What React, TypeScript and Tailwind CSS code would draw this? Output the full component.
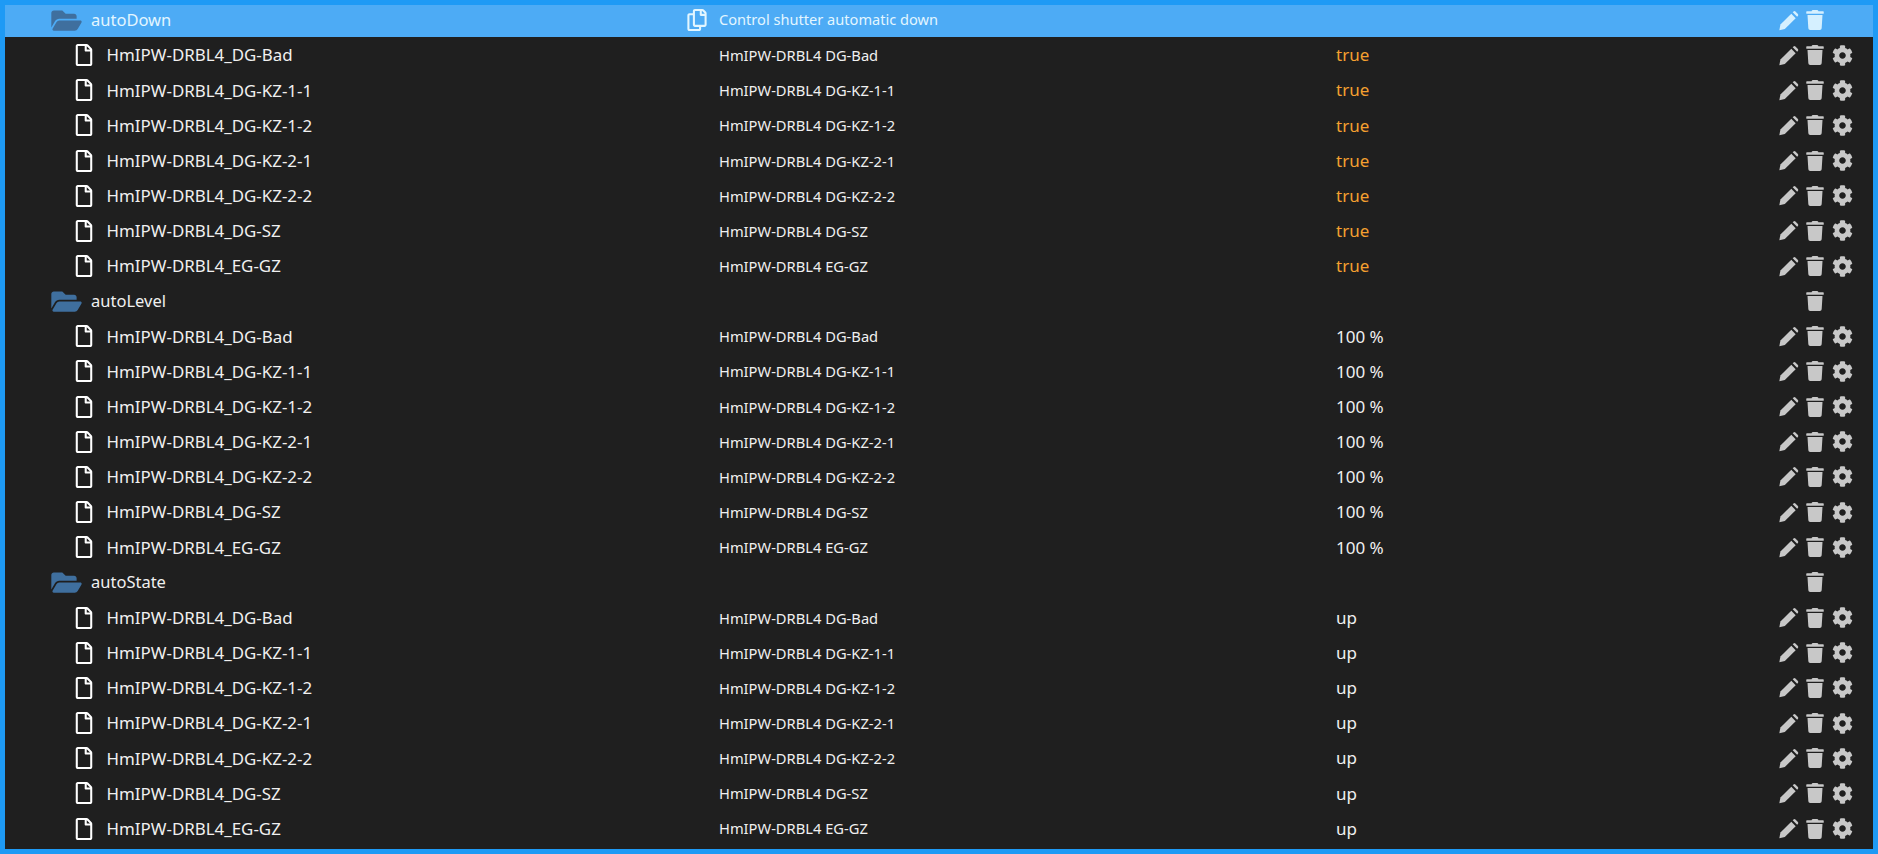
import { FaFolderOpen, FaRegFile, FaRegCopy, FaTrash, FaCog } from 'react-icons/fa'

const devices = [
  ['HmIPW-DRBL4_DG-Bad', 'HmIPW-DRBL4 DG-Bad'],
  ['HmIPW-DRBL4_DG-KZ-1-1', 'HmIPW-DRBL4 DG-KZ-1-1'],
  ['HmIPW-DRBL4_DG-KZ-1-2', 'HmIPW-DRBL4 DG-KZ-1-2'],
  ['HmIPW-DRBL4_DG-KZ-2-1', 'HmIPW-DRBL4 DG-KZ-2-1'],
  ['HmIPW-DRBL4_DG-KZ-2-2', 'HmIPW-DRBL4 DG-KZ-2-2'],
  ['HmIPW-DRBL4_DG-SZ', 'HmIPW-DRBL4 DG-SZ'],
  ['HmIPW-DRBL4_EG-GZ', 'HmIPW-DRBL4 EG-GZ'],
]

function Pencil() {
  return (
    <svg viewBox="0 0 24 24" fill="currentColor" className="h-[21px] w-[21px]">
      <path d="M1.5 23l1.3-6.3L15.2 4.3l5 5L7.8 21.7z" />
      <path d="M16.8 2.7l.9-.9a1.6 1.6 0 0 1 2.2 0l2.8 2.8a1.6 1.6 0 0 1 0 2.2l-.9.9z" />
    </svg>
  )
}

function Actions({ edit, config, className }: { edit?: boolean; config?: boolean; className: string }) {
  return (
    <div className={`ml-auto grid grid-cols-[27px_27px_27px] place-items-center pr-[17px] ${className}`}>
      <div>{edit && <Pencil />}</div>
      <FaTrash className="mr-[1px] h-[20px] w-[18px]" />
      <div>{config && <FaCog className="h-[21px] w-[21px]" />}</div>
    </div>
  )
}

function FolderRow({ name, desc, selected }: { name: string; desc?: string; selected?: boolean }) {
  return (
    <div className={`flex items-center ${selected ? 'mb-[0.5px] h-[32px] bg-[#4dabf5] pb-[2px] text-[#e3f6ff]' : 'h-[35.17px] text-[#f0f0f0]'}`}>
      <div className="flex w-[714px] shrink-0 items-center pl-[46px]">
        <FaFolderOpen className="h-[27px] w-[31px] text-[#3f6f9e]" />
        <span className="ml-[9px] text-[16.5px]">{name}</span>
      </div>
      <div className="flex w-[617px] shrink-0 items-center text-[14.6px]">
        {desc && <FaRegCopy className="-ml-[32px] mr-[12px] h-[22px] w-[20px]" />}
        {desc}
      </div>
      <Actions edit={selected} className={selected ? 'text-[#d5f0ff]' : 'text-[#c8c8c8]'} />
    </div>
  )
}

function DeviceRow({ name, desc, value, orange }: { name: string; desc: string; value: string; orange?: boolean }) {
  return (
    <div className="flex h-[35.17px] items-center text-[#f0f0f0]">
      <div className="flex w-[714px] shrink-0 items-center pl-[68px]">
        <FaRegFile className="h-[22px] w-[22px] text-white" />
        <span className="ml-[11.5px] text-[16.9px]">{name}</span>
      </div>
      <div className="w-[617px] shrink-0 text-[14.7px]">{desc}</div>
      <div className={`text-[17px] ${orange ? 'text-[#f5a030]' : ''}`}>{value}</div>
      <Actions edit config className="text-[#c8c8c8]" />
    </div>
  )
}

export default function App() {
  return (
    <div className="h-[854px] w-[1878px] overflow-hidden border-[5px] border-[#1e9af5] bg-[#1f1f1f] font-['Noto_Sans',sans-serif]">
      <FolderRow name="autoDown" desc="Control shutter automatic down" selected />
      {devices.map(([n, d]) => <DeviceRow key={n} name={n} desc={d} value="true" orange />)}
      <FolderRow name="autoLevel" />
      {devices.map(([n, d]) => <DeviceRow key={n} name={n} desc={d} value="100 %" />)}
      <FolderRow name="autoState" />
      {devices.map(([n, d]) => <DeviceRow key={n} name={n} desc={d} value="up" />)}
    </div>
  )
}
